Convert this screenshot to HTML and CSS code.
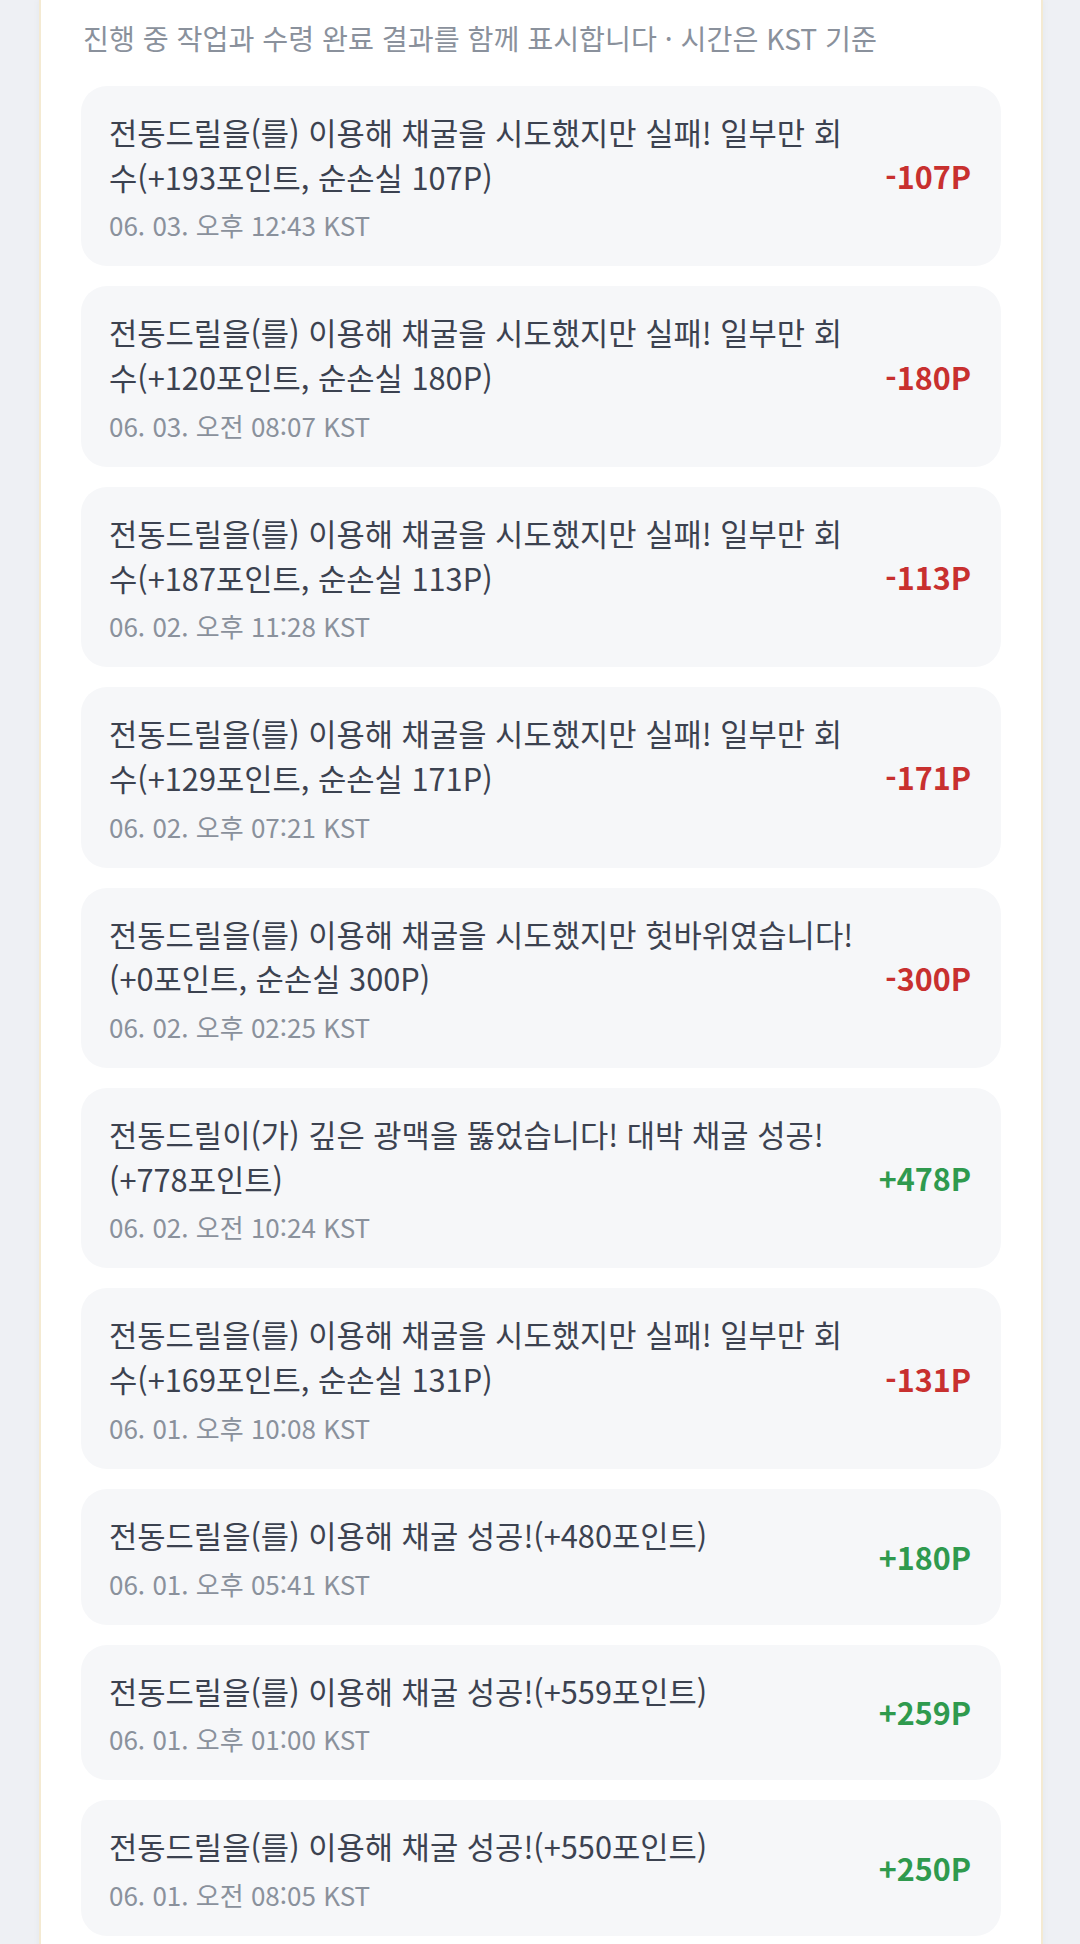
FILE: index.html
```html
<!DOCTYPE html>
<html lang="ko">
<head>
<meta charset="utf-8">
<title>채굴 기록</title>
<link rel="stylesheet" href="styles.css">
</head>
<body>
<div class="page">
  <section class="card">
    <p class="subtitle">진행 중 작업과 수령 완료 결과를 함께 표시합니다 · 시간은 KST 기준</p>
    <ul class="log">
      <li class="item">
        <div class="info">
          <div class="title">전동드릴을(를) 이용해 채굴을 시도했지만 실패! 일부만 회수(+193포인트, 순손실 107P)</div>
          <div class="time">06. 03. 오후 12:43 KST</div>
        </div>
        <div class="amount loss">-107P</div>
      </li>
      <li class="item">
        <div class="info">
          <div class="title">전동드릴을(를) 이용해 채굴을 시도했지만 실패! 일부만 회수(+120포인트, 순손실 180P)</div>
          <div class="time">06. 03. 오전 08:07 KST</div>
        </div>
        <div class="amount loss">-180P</div>
      </li>
      <li class="item">
        <div class="info">
          <div class="title">전동드릴을(를) 이용해 채굴을 시도했지만 실패! 일부만 회수(+187포인트, 순손실 113P)</div>
          <div class="time">06. 02. 오후 11:28 KST</div>
        </div>
        <div class="amount loss">-113P</div>
      </li>
      <li class="item">
        <div class="info">
          <div class="title">전동드릴을(를) 이용해 채굴을 시도했지만 실패! 일부만 회수(+129포인트, 순손실 171P)</div>
          <div class="time">06. 02. 오후 07:21 KST</div>
        </div>
        <div class="amount loss">-171P</div>
      </li>
      <li class="item">
        <div class="info">
          <div class="title">전동드릴을(를) 이용해 채굴을 시도했지만 헛바위였습니다!(+0포인트, 순손실 300P)</div>
          <div class="time">06. 02. 오후 02:25 KST</div>
        </div>
        <div class="amount loss">-300P</div>
      </li>
      <li class="item">
        <div class="info">
          <div class="title">전동드릴이(가) 깊은 광맥을 뚫었습니다! 대박 채굴 성공!(+778포인트)</div>
          <div class="time">06. 02. 오전 10:24 KST</div>
        </div>
        <div class="amount gain">+478P</div>
      </li>
      <li class="item">
        <div class="info">
          <div class="title">전동드릴을(를) 이용해 채굴을 시도했지만 실패! 일부만 회수(+169포인트, 순손실 131P)</div>
          <div class="time">06. 01. 오후 10:08 KST</div>
        </div>
        <div class="amount loss">-131P</div>
      </li>
      <li class="item">
        <div class="info">
          <div class="title">전동드릴을(를) 이용해 채굴 성공!(+480포인트)</div>
          <div class="time">06. 01. 오후 05:41 KST</div>
        </div>
        <div class="amount gain">+180P</div>
      </li>
      <li class="item">
        <div class="info">
          <div class="title">전동드릴을(를) 이용해 채굴 성공!(+559포인트)</div>
          <div class="time">06. 01. 오후 01:00 KST</div>
        </div>
        <div class="amount gain">+259P</div>
      </li>
      <li class="item">
        <div class="info">
          <div class="title">전동드릴을(를) 이용해 채굴 성공!(+550포인트)</div>
          <div class="time">06. 01. 오전 08:05 KST</div>
        </div>
        <div class="amount gain">+250P</div>
      </li>
    </ul>
  </section>
</div>
</body>
</html>
```

FILE: styles.css
```css
* {
  box-sizing: border-box;
}

html, body {
  margin: 0;
  padding: 0;
}

body {
  background: #eef0f4;
  font-family: "Noto Sans CJK KR", "Noto Sans", sans-serif;
  height: 1944px;
  overflow: hidden;
}

.page {
  padding: 0 37px 0 39px;
}

.card {
  background: #ffffff;
  border-left: 2px solid #f4ead2;
  border-right: 2px solid #f4ead2;
  box-shadow: 0 0 6px rgba(120, 130, 150, 0.08);
  padding: 18px 40px 40px;
  min-height: 1944px;
}

.subtitle {
  margin: 0 0 28px;
  color: #8a919c;
  font-size: 28.2px;
  line-height: 40px;
  padding-left: 2px;
}

.log {
  list-style: none;
  margin: 0;
  padding: 0;
  display: flex;
  flex-direction: column;
  gap: 20px;
}

.item {
  background: #f6f7f9;
  border-radius: 26px;
  padding: 24px 30px 24px 28px;
  display: flex;
  align-items: center;
  gap: 22px;
}

.info {
  flex: 1;
  min-width: 0;
}

.title {
  color: #3c4250;
  font-size: 30.75px;
  line-height: 44.7px;
}

.time {
  color: #8a919c;
  font-size: 26px;
  line-height: 34px;
  margin-top: 9px;
}

.amount {
  flex-shrink: 0;
  font-size: 30.5px;
  font-weight: 700;
  line-height: 40px;
}

.loss {
  color: #c8302f;
}

.gain {
  color: #2f9a4e;
}
```
